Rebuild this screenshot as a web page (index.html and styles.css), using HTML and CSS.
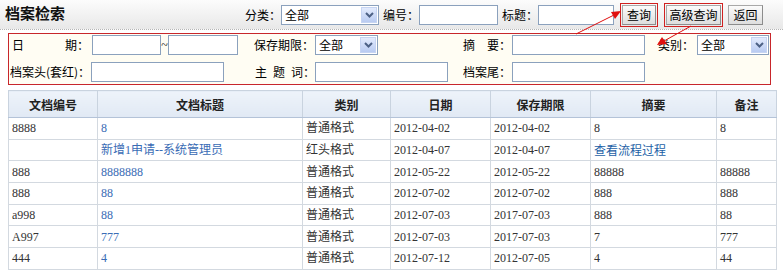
FILE: index.html
```html
<!DOCTYPE html>
<html lang="zh-CN">
<head>
	<meta charset="UTF-8">
	<title>档案检索</title>
	<link rel="stylesheet" href="styles.css">
</head>
<body>
	<div class="top">
		<h1 class="top-title">档案检索</h1>
		<div class="top-search">
			<label>分类：</label>
			<div class="sel sel-kind"><span>全部</span><i class="sel-btn"><svg width="9" height="6" viewBox="0 0 9 6"><path d="M1 1 L4.5 4.5 L8 1" fill="none" stroke="#4d6185" stroke-width="2"/></svg></i></div>
			<label>编号：</label>
			<input type="text" class="txt w-no">
			<label>标题：</label>
			<input type="text" class="txt w-title">
			<span class="mark"><button class="btn btn-q">查询</button></span>
			<span class="mark"><button class="btn btn-adv">高级查询</button></span>
			<button class="btn btn-back">返回</button>
		</div>
	</div>

	<!-- 高级查询 -->
	<div class="adv">
		<label class="lab lab-date"><span>日</span><span>期：</span></label>
		<div class="cell"><input type="text" class="txt w-d1"><span class="tilde">~</span><input type="text" class="txt w-d2"></div>
		<label class="lab">保存期限：</label>
		<div class="cell"><div class="sel sel-keep"><span>全部</span><i class="sel-btn"><svg width="9" height="6" viewBox="0 0 9 6"><path d="M1 1 L4.5 4.5 L8 1" fill="none" stroke="#4d6185" stroke-width="2"/></svg></i></div></div>
		<label class="lab">摘&emsp;要：</label>
		<div class="cell"><input type="text" class="txt w-long"></div>
		<label class="lab">类别：</label>
		<div class="cell"><div class="sel sel-type"><span>全部</span><i class="sel-btn"><svg width="9" height="6" viewBox="0 0 9 6"><path d="M1 1 L4.5 4.5 L8 1" fill="none" stroke="#4d6185" stroke-width="2"/></svg></i></div></div>

		<label class="lab">档案头(套红)：</label>
		<div class="cell"><input type="text" class="txt w-long w-first"></div>
		<label class="lab lab-sub">主&ensp;题&ensp;词：</label>
		<div class="cell"><input type="text" class="txt w-long"></div>
		<label class="lab">档案尾：</label>
		<div class="cell"><input type="text" class="txt w-long"></div>
	</div>

	<table class="list">
		<colgroup>
			<col style="width:89px"><col style="width:205px"><col style="width:88px"><col style="width:100px"><col style="width:100px"><col style="width:126px"><col style="width:60px">
		</colgroup>
		<thead>
			<tr><th>文档编号</th><th>文档标题</th><th>类别</th><th>日期</th><th>保存期限</th><th>摘要</th><th>备注</th></tr>
		</thead>
		<tbody>
			<tr><td>8888</td><td><a href="javascript:void(0);">8</a></td><td>普通格式</td><td>2012-04-02</td><td>2012-04-02</td><td>8</td><td>8</td></tr>
			<tr><td></td><td><a href="javascript:void(0);">新增1申请--系统管理员</a></td><td>红头格式</td><td>2012-04-07</td><td>2012-04-07</td><td><a href="javascript:void(0);" class="flow">查看流程过程</a></td><td></td></tr>
			<tr><td>888</td><td><a href="javascript:void(0);">8888888</a></td><td>普通格式</td><td>2012-05-22</td><td>2012-05-22</td><td>88888</td><td>88888</td></tr>
			<tr><td>888</td><td><a href="javascript:void(0);">88</a></td><td>普通格式</td><td>2012-07-02</td><td>2012-07-02</td><td>888</td><td>888</td></tr>
			<tr><td>a998</td><td><a href="javascript:void(0);">88</a></td><td>普通格式</td><td>2012-07-03</td><td>2017-07-03</td><td>888</td><td>88</td></tr>
			<tr><td>A997</td><td><a href="javascript:void(0);">777</a></td><td>普通格式</td><td>2012-07-03</td><td>2017-07-03</td><td>7</td><td>777</td></tr>
			<tr><td>444</td><td><a href="javascript:void(0);">4</a></td><td>普通格式</td><td>2012-07-12</td><td>2012-07-05</td><td>4</td><td>44</td></tr>
		</tbody>
	</table>

	<!-- 标注箭头 -->
	<svg class="notes" width="783" height="273" viewBox="0 0 783 273">
		<line x1="576" y1="34" x2="613" y2="15.5" stroke="#e01010" stroke-width="1"/>
		<polygon points="621,11 611,12 615,19" fill="#e01010"/>
		<line x1="691" y1="26" x2="664" y2="41" stroke="#e01010" stroke-width="1"/>
		<polygon points="657,45 662,37 667,44" fill="#e01010"/>
	</svg>
</body>
</html>
```

FILE: styles.css
```css
html, body, h1, div, span, label, table, th, td, a {
	margin: 0px;
	padding: 0px;
}
body {
	position: relative;
	width: 783px;
	height: 273px;
	overflow: hidden;
	background-color: #fff;
	font-family: "Noto Sans CJK SC", "Liberation Sans", sans-serif;
	font-size: 12px;
	color: #000;
}
a {
	text-decoration: none;
	color: #3463a8;
}

/* 顶部 */
.top {
	display: flex;
	align-items: center;
	height: 29px;
	border-bottom: 1px dotted #b5b5b5;
	background: linear-gradient(to bottom, #fcfcfc, #e8e8e8);
}
.top-title {
	align-self: flex-start;
	margin: 3px 0px 0px 5px;
	font-size: 15px;
	line-height: 20px;
	font-weight: bold;
	color: #111;
}
.top-search {
	display: flex;
	align-items: center;
	margin-left: auto;
	padding-right: 20px;
	height: 29px;
}
.top-search label {
	width: 36px;
	line-height: 20px;
}
.top-search .sel-kind {
	width: 98px;
	margin-right: 4px;
}
.w-no {
	width: 79px;
	margin-right: 4px;
}
.w-title {
	width: 76px;
	margin-right: 6px;
}
.mark {
	display: flex;
	border: 1px solid #d02020;
	padding: 1px;
	margin-right: 6px;
}
.mark + .mark {
	margin-right: 5px;
}
.btn {
	height: 20px;
	padding: 0px;
	border: 1px solid #a8a8a8;
	border-right-color: #8c8c8c;
	border-bottom-color: #8c8c8c;
	background: linear-gradient(to bottom, #fbfbfb, #dedede);
	font-family: "Noto Sans CJK SC", sans-serif;
	font-size: 12px;
	line-height: 18px;
	color: #000;
}
.btn-q {
	width: 34px;
}
.btn-adv {
	width: 55px;
}
.btn-back {
	width: 35px;
}

/* 输入框、下拉框 */
.txt {
	box-sizing: border-box;
	height: 20px;
	border: 1px solid #8ba1bd;
	background-color: #fff;
	padding: 0px 2px;
	font-size: 12px;
}
.sel {
	box-sizing: border-box;
	display: flex;
	align-items: center;
	height: 20px;
	border: 1px solid #8ba1bd;
	background-color: #fff;
	padding: 1px;
	line-height: 16px;
}
.sel span {
	flex: 1;
	padding-left: 2px;
}
.sel-btn {
	display: flex;
	align-items: center;
	justify-content: center;
	width: 16px;
	height: 16px;
	box-sizing: border-box;
	border: 1px solid #c6d4f2;
	background: linear-gradient(to bottom, #e3ebfd, #b9cbf1);
}

/* 高级查询框 */
.adv {
	display: grid;
	grid-template-columns: 82px 163px 61px 148px 49px 146px 39px 73px;
	grid-auto-rows: 20px;
	row-gap: 7px;
	align-items: center;
	width: 763px;
	box-sizing: border-box;
	margin: 3px 0px 0px 8px;
	padding: 1px 0px 2px 0px;
	border: 1px solid #c8262b;
	background-color: #fffdf3;
}
.lab {
	line-height: 20px;
	white-space: nowrap;
}
.lab-date {
	display: flex;
	justify-content: space-between;
	width: 77px;
	padding-left: 3px;
}
.lab-sub {
	padding-left: 1px;
}
.cell {
	display: flex;
	align-items: center;
}
.w-d1 {
	width: 69px;
	margin-left: 1px;
}
.tilde {
	width: 7px;
	text-align: center;
	font-family: "Liberation Serif", serif;
}
.w-d2 {
	width: 70px;
}
.sel-keep {
	width: 63px;
}
.sel-type {
	width: 72px;
}
.w-long {
	width: 133px;
}
.adv > label:nth-child(9) {
	padding-left: 1px;
}

/* 列表 */
.list {
	margin: 5px 0px 0px 8px;
	width: 768px;
	table-layout: fixed;
	border-collapse: collapse;
	border: 1px solid #9fb4d2;
	font-family: "Liberation Serif", "Noto Sans CJK SC", serif;
	font-size: 12px;
	color: #333;
}
.list th {
	height: 26px;
	border: 1px solid #c9d3df;
	border-bottom-color: #b4c3d8;
	background: linear-gradient(to bottom, #eef3fa, #e1e9f4);
	font-family: "Noto Sans CJK SC", sans-serif;
	font-weight: bold;
	color: #222;
	text-align: center;
}
.list td {
	height: 20.7px;
	padding: 0px 0px 0px 3px;
	line-height: 16px;
	border: 1px solid #d3d9e0;
	white-space: nowrap;
}
.list td a {
	color: #3a6cb5;
}
.list td a.flow {
	font-family: "Noto Sans CJK SC", sans-serif;
	color: #1d5fa6;
}

/* 标注 */
.notes {
	position: absolute;
	left: 0px;
	top: 0px;
	pointer-events: none;
}
```
